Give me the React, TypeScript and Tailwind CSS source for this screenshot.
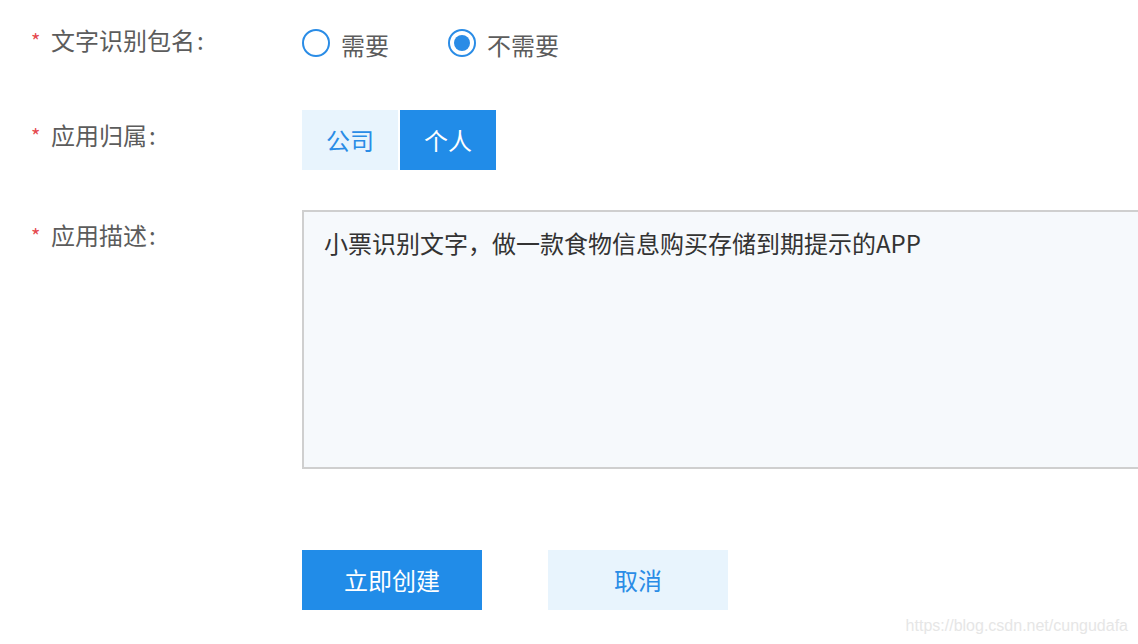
import React from "react";

const font = { fontFamily: '"Noto Sans CJK SC", "Noto Sans", sans-serif' };

function Label({ text }: { text: string }) {
  return (
    <div className="w-[302px] shrink-0 flex items-center pl-[31px] h-[30px] mt-[10px]">
      <span className="text-[#e5484d] text-[20px] w-[20px] leading-none mt-[2px]">*</span>
      <span className="text-[24px] text-[#5c5c5c] leading-[30px]">{text}</span>
      <span className="text-[24px] text-[#5c5c5c] leading-[30px] ml-[2px]">:</span>
    </div>
  );
}

function Radio({ checked, text }: { checked: boolean; text: string }) {
  return (
    <div className="flex items-center">
      <div className="w-[28px] h-[28px] rounded-full border-2 border-[#2a8ce6] flex items-center justify-center bg-white">
        {checked && <div className="w-[16px] h-[16px] rounded-full bg-[#2a8ce6]" />}
      </div>
      <span className="ml-[11px] text-[24px] text-[#5c5c5c] leading-[30px] mt-[4px]">{text}</span>
    </div>
  );
}

export default function App() {
  return (
    <div className="w-[1138px] h-[644px] bg-white relative overflow-hidden" style={font}>
      <div className="flex flex-col pt-[15px]">
        <div className="flex items-start h-[56px]">
          <Label text="文字识别包名" />
          <div className="flex items-center h-[56px] gap-[59px]">
            <Radio checked={false} text="需要" />
            <Radio checked={true} text="不需要" />
          </div>
        </div>
        <div className="flex items-start mt-[39px]">
          <Label text="应用归属" />
          <div className="flex gap-[2px]">
            <div className="w-[96px] h-[60px] bg-[#e8f4fd] text-[#2a8ce6] text-[24px] flex items-center justify-center">公司</div>
            <div className="w-[96px] h-[60px] bg-[#218ce8] text-white text-[24px] flex items-center justify-center">个人</div>
          </div>
        </div>
        <div className="flex items-start mt-[40px]">
          <Label text="应用描述" />
          <div className="flex-1 h-[259px] border-2 border-r-0 border-[#cfcfcf] bg-[#f6f9fc] pl-[20px] pt-[16px] mr-[-2px]">
            <span className="text-[24px] text-[#333333] leading-[30px]">小票识别文字，做一款食物信息购买存储到期提示的APP</span>
          </div>
        </div>
        <div className="flex mt-[81px] pl-[302px] gap-[66px]">
          <div className="w-[180px] h-[60px] bg-[#218ce8] text-white text-[24px] flex items-center justify-center">立即创建</div>
          <div className="w-[180px] h-[60px] bg-[#e8f4fd] text-[#2a8ce6] text-[24px] flex items-center justify-center">取消</div>
        </div>
      </div>
      <div
        className="absolute right-[10px] bottom-[6px] text-[16px] text-[#e6e6e6]"
        style={{ fontFamily: '"Liberation Sans", sans-serif' }}
      >
        https://blog.csdn.net/cungudafa
      </div>
    </div>
  );
}
